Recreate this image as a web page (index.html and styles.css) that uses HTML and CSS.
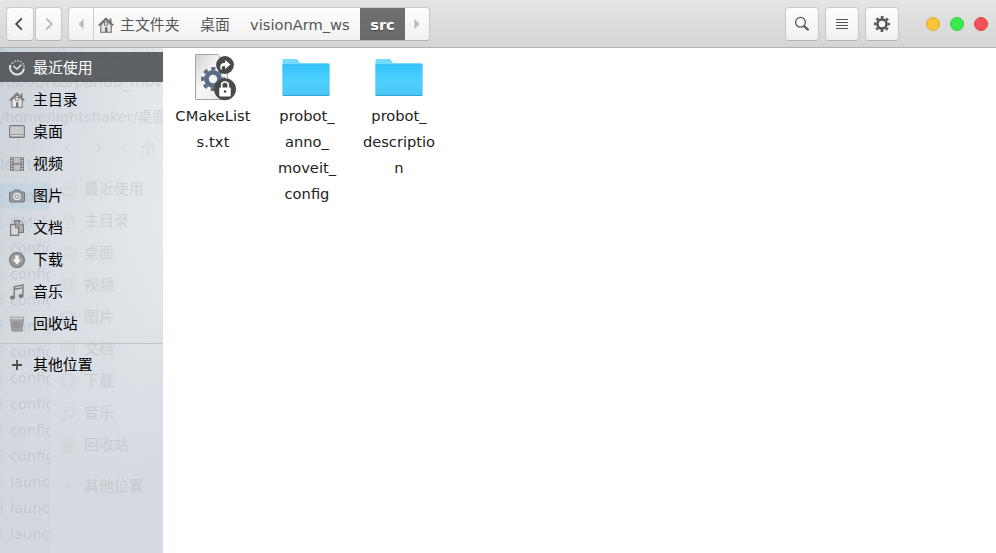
FILE: index.html
```
<!DOCTYPE html>
<html lang="zh-CN">
<head>
<meta charset="utf-8">
<title>src</title>
<link rel="stylesheet" href="styles.css">
</head>
<body>
<svg class="defs" width="0" height="0">
  <defs>
    <linearGradient id="folderFill" x1="0" y1="0" x2="0" y2="1"><stop offset="0" stop-color="#36c5fb"/><stop offset=".55" stop-color="#4fd0fe"/><stop offset="1" stop-color="#4cc5f4"/></linearGradient>
    <linearGradient id="paper" x1="0" y1="0" x2="1" y2="1"><stop offset="0" stop-color="#cfcfcf"/><stop offset=".45" stop-color="#f8f8f8"/><stop offset="1" stop-color="#e6e6e6"/></linearGradient>
  </defs>
  <symbol id="recent" viewBox="0 0 16 16"><path d="M1.600 4.800A7 7 0 1 0 15 8.300" fill="none" stroke="currentColor" stroke-width="2"/><path d="M4.300 6l3.700 3 4.300-4.300" fill="none" stroke="currentColor" stroke-width="1.500"/><path d="M2.800 3h1.500M5.300 1.200h1.500M8.300.8h1.500M11.200 1.600h1.500M13.300 3.800h1.500M14.300 6.300h1.500" stroke="currentColor" stroke-width="1.300"/></symbol>
  <symbol id="home" viewBox="0 0 16 16"><path d="M2.800 8v7.300h10.400V8L8 2.700z" fill="#e4e6e9" stroke="currentColor" stroke-width="1.100"/><path d="M12.600 5.500V1.500" stroke="currentColor" stroke-width="1.800"/><path d="M.6 8.500L8 1.500l7.400 7" fill="none" stroke="currentColor" stroke-width="1.700"/><path d="M6.500 5.500h3v2.800h-3z" fill="#f4f5f6" stroke="currentColor" stroke-width=".9"/><path d="M7 10.200h2.400V15H7z" fill="currentColor"/></symbol>
  <symbol id="desktop" viewBox="0 0 16 16"><rect x=".6" y="1.600" width="14.800" height="11.800" rx="1" fill="#c8cbce" stroke="currentColor" stroke-width="1.100"/><path d="M2.500 13v-2.500h11V13z" fill="#eceeef" stroke="currentColor" stroke-width=".7"/><path d="M5.500 11.500V13M8 11.500V13M10.500 11.500V13" stroke="currentColor"/></symbol>
  <symbol id="video" viewBox="0 0 16 16"><path d="M1 1h14v14H1z" fill="currentColor"/><path d="M4.500 1.500h7v5.700h-7zM4.500 8.500h7v6h-7z" fill="#bcc0c3"/><path d="M2.600 1.500V15M13.400 1.500V15" stroke="#e4e6e8" stroke-width="1.400" stroke-dasharray="1.400 1.200"/></symbol>
  <symbol id="camera" viewBox="0 0 16 16"><path d="M1.500 4h2.700l1.300-2h5l1.300 2h2.700q1 0 1 1v8q0 1-1 1h-13q-1 0-1-1V5q0-1 1-1z" fill="#97999b" stroke="currentColor"/><circle cx="8" cy="8.500" r="3.200" fill="#a8abae" stroke="#eef0f1" stroke-width="1.200"/><circle cx="8" cy="8.500" r="1" fill="#eef0f1"/></symbol>
  <symbol id="docs" viewBox="0 0 16 16"><path d="M5.500.7h5.300l3.600 3.800v7.800H5.500z" fill="#acafb1" stroke="currentColor" stroke-width="1.200"/><path d="M10.600.8v4h4" fill="#dfe2e4" stroke="currentColor"/><path d="M1.600 4.600h5l3 3v7.700h-8z" fill="#d6d9dc" stroke="currentColor" stroke-width="1.200"/><path d="M6.400 4.700v3.200h3.200" fill="none" stroke="currentColor"/></symbol>
  <symbol id="down" viewBox="0 0 16 16"><circle cx="8" cy="8" r="7.400" fill="#999b9d" stroke="currentColor" stroke-width="1.200"/><path d="M6.200 3.500h3.600v4h2.500L8 12.400 3.700 7.500h2.500z" fill="#f3f4f5"/></symbol>
  <symbol id="music" viewBox="0 0 16 16"><path d="M5.200 13V2.800L13.900.9v10.600M5.200 5.500l8.700-1.900" fill="none" stroke="currentColor" stroke-width="1.400"/><ellipse cx="3.500" cy="13.600" rx="2.500" ry="2" fill="currentColor"/><ellipse cx="12" cy="12" rx="2.500" ry="2" fill="currentColor"/></symbol>
  <symbol id="trash" viewBox="0 0 16 16"><path d="M1.300 1.200h13.400l-1.800 13.900H3.100z" fill="#a0a3a5" stroke="currentColor" stroke-width=".7"/><path d="M1.600 1.500h12.800l-.2 1.700H1.800z" fill="#d0d3d5"/><path d="M4 6l4-1 4 3-1 4-4 1-3-3z" fill="currentColor" opacity=".4"/></symbol>
  <symbol id="plus" viewBox="0 0 16 16"><path d="M8 3v10M3 8h10" stroke="currentColor" stroke-width="1.800"/></symbol>
  <symbol id="left" viewBox="0 0 16 16"><path d="M10.800 2.300L5.200 8l5.600 5.700" fill="none" stroke="currentColor" stroke-width="1.800"/></symbol>
  <symbol id="right" viewBox="0 0 16 16"><path d="M5.200 2.300L10.800 8l-5.600 5.700" fill="none" stroke="currentColor" stroke-width="1.800"/></symbol>
  <symbol id="triL" viewBox="0 0 6 10"><path d="M5.500 0v10L.5 5z" fill="currentColor"/></symbol>
  <symbol id="triR" viewBox="0 0 6 10"><path d="M.5 0v10l5-5z" fill="currentColor"/></symbol>
  <symbol id="folder" viewBox="0 0 48 37"><path d="M.5 6V1.500Q.5 0 2 0h12q1 0 1.800 1l2.200 3h28q1.500 0 1.500 1.500V9H.5z" fill="#74dafe"/><rect x=".3" y="5.500" width="47.400" height="31.500" rx="1" fill="url(#folderFill)"/><path d="M1 6h46" stroke="#2bb6ea" stroke-width=".8"/><path d="M1 36.500h46" stroke="#32a7d5"/></symbol>
  <symbol id="check" viewBox="0 0 16 16"><path d="M.5 1.500h13v13H.5z" fill="none" stroke="currentColor"/><path d="M10 9l3-3" stroke="currentColor" stroke-width="2"/></symbol>
</svg>

<header class="bar">
  <div class="nav">
    <button class="btn nav-btn"><svg class="i16"><use href="#left"/></svg></button>
    <button class="btn nav-btn off"><svg class="i16"><use href="#right"/></svg></button>
  </div>
  <div class="path">
    <span class="end start"><svg class="tri"><use href="#triL"/></svg></span>
    <span class="crumb crumb-home"><svg class="i16"><use href="#home"/></svg>主文件夹</span>
    <span class="crumb crumb-desk">桌面</span>
    <span class="crumb crumb-ws">visionArm_ws</span>
    <span class="crumb current">src</span>
    <span class="end"><svg class="tri"><use href="#triR"/></svg></span>
  </div>
  <div class="tools">
    <button class="btn"><svg class="i16" viewBox="0 0 16 16"><circle cx="6.500" cy="6.300" r="4.900" fill="none" stroke="#555" stroke-width="1.300"/><path d="M10 10l4.500 4.200" stroke="#555" stroke-width="2.200"/></svg></button>
    <button class="btn"><svg class="i16" viewBox="0 0 16 16"><path d="M2 3.500h12M2 6.500h12M2 9.500h12M2 12.500h12" stroke="#555"/></svg></button>
    <button class="btn"><svg class="i16" viewBox="0 0 16 16"><circle cx="8" cy="8" r="4.600" fill="none" stroke="#555" stroke-width="2.600"/><circle cx="8" cy="8" r="6.900" fill="none" stroke="#555" stroke-width="2.200" stroke-dasharray="2.700 2.719" stroke-dashoffset="1.350"/></svg></button>
  </div>
  <div class="lights"><i class="light min"></i><i class="light max"></i><i class="light close"></i></div>
</header>

<main class="body">
  <aside class="side">
    <div class="ghost" aria-hidden="true">
      <div class="g-lines">
        <p class="g-over">Overwriting an existing</p>
        <p class="g-robot">robot/ros/panda_move</p>
        <p class="g-path">/home/lightshaker/桌面</p>
        <p class="g-les">les to</p>
      </div>
      <ul class="g-tree">
        <li class="g-sel"><svg class="i16"><use href="#check"/></svg>pro</li>
        <li><svg class="i16"><use href="#check"/></svg>CMake</li>
        <li><svg class="i16"><use href="#check"/></svg>config</li>
        <li><svg class="i16"><use href="#check"/></svg>config</li>
        <li><svg class="i16"><use href="#check"/></svg>config</li>
        <li><svg class="i16"><use href="#check"/></svg>config</li>
        <li><svg class="i16"><use href="#check"/></svg>config</li>
        <li><svg class="i16"><use href="#check"/></svg>config</li>
        <li><svg class="i16"><use href="#check"/></svg>config</li>
        <li><svg class="i16"><use href="#check"/></svg>config</li>
        <li><svg class="i16"><use href="#check"/></svg>config</li>
        <li><svg class="i16"><use href="#check"/></svg>launch</li>
        <li><svg class="i16"><use href="#check"/></svg>launch</li>
        <li><svg class="i16"><use href="#check"/></svg>launch</li>
      </ul>
      <div class="g-win">
        <div class="g-nav"><svg class="i16"><use href="#left"/></svg><svg class="i16"><use href="#right"/></svg><svg class="tri"><use href="#triL"/></svg><svg class="i16"><use href="#home"/></svg></div>
        <div class="row"><svg class="i16"><use href="#recent"/></svg>最近使用</div>
        <div class="row"><svg class="i16"><use href="#home"/></svg>主目录</div>
        <div class="row"><svg class="i16"><use href="#desktop"/></svg>桌面</div>
        <div class="row"><svg class="i16"><use href="#video"/></svg>视频</div>
        <div class="row"><svg class="i16"><use href="#camera"/></svg>图片</div>
        <div class="row"><svg class="i16"><use href="#docs"/></svg>文档</div>
        <div class="row"><svg class="i16"><use href="#down"/></svg>下载</div>
        <div class="row"><svg class="i16"><use href="#music"/></svg>音乐</div>
        <div class="row"><svg class="i16"><use href="#trash"/></svg>回收站</div>
        <div class="row other"><svg class="i16"><use href="#plus"/></svg>其他位置</div>
      </div>
    </div>
    <nav class="places">
      <div class="row active"><svg class="i16"><use href="#recent"/></svg>最近使用</div>
      <div class="row"><svg class="i16"><use href="#home"/></svg>主目录</div>
      <div class="row"><svg class="i16"><use href="#desktop"/></svg>桌面</div>
      <div class="row"><svg class="i16"><use href="#video"/></svg>视频</div>
      <div class="row"><svg class="i16"><use href="#camera"/></svg>图片</div>
      <div class="row"><svg class="i16"><use href="#docs"/></svg>文档</div>
      <div class="row"><svg class="i16"><use href="#down"/></svg>下载</div>
      <div class="row"><svg class="i16"><use href="#music"/></svg>音乐</div>
      <div class="row"><svg class="i16"><use href="#trash"/></svg>回收站</div>
      <div class="row other"><svg class="i16 dark"><use href="#plus"/></svg>其他位置</div>
    </nav>
  </aside>
  <section class="files">
    <figure class="file">
      <svg class="pic" viewBox="0 0 48 48">
        <path d="M6.500 1.500h22l10 11v34h-32z" fill="url(#paper)" stroke="#a4a4a4"/>
        <circle cx="24" cy="26" r="6.600" fill="none" stroke="#5d6c86" stroke-width="4.800"/>
        <circle cx="24" cy="26" r="10.300" fill="none" stroke="#5d6c86" stroke-width="3.400" stroke-dasharray="4.200 3.890" stroke-dashoffset="2.100"/>
        <circle cx="36" cy="12" r="8.900" fill="#4a4a4a"/>
        <path d="M31.300 16.500v-3q0-3.500 3.800-3.500h.900V7l5.500 4.500-5.500 4.500v-3h-1.500q-1.700 0-1.700 1.700v1.800z" fill="#fff"/>
        <circle cx="36" cy="36.300" r="11" fill="#4a4a4a"/>
        <rect x="30.300" y="34.500" width="11.400" height="9" rx="1" fill="#fff"/>
        <path d="M32.700 35v-3.200q0-2.800 3.300-2.800t3.300 2.800V35" fill="none" stroke="#fff" stroke-width="1.600"/>
        <circle cx="36" cy="38.500" r="1.300" fill="#4a4a4a"/>
      </svg>
      <figcaption class="wide">CMakeList<br>s.txt</figcaption>
    </figure>
    <figure class="file"><svg class="pic folder"><use href="#folder"/></svg><figcaption class="nudge">probot_<br>anno_<br>moveit_<br>config</figcaption></figure>
    <figure class="file"><svg class="pic folder"><use href="#folder"/></svg><figcaption>probot_<br>descriptio<br>n</figcaption></figure>
  </section>
</main>
</body>
</html>
```
FILE: styles.css
```
* { box-sizing: border-box; }
body {
  margin: 0;
  width: 996px;
  height: 553px;
  overflow: hidden;
  background: #fff;
  color: #222;
  font: 14.667px/26px "DejaVu Sans", "Noto Sans CJK SC", sans-serif;
}
.defs { position: absolute; }
svg { display: block; flex: none; }
.i16 { width: 16px; height: 16px; }
.tri { width: 6px; height: 10px; color: #b8b8b8; }

.bar {
  display: flex;
  align-items: center;
  height: 48px;
  padding: 1px 8px 0 6px;
  background: linear-gradient(#e5e5e5, #d5d5d5);
  border-bottom: 1px solid #b2b2b2;
  border-top-left-radius: 3px;
}
.btn, .path {
  height: 34px;
  padding: 0;
  background: linear-gradient(#fdfdfd, #f1f1f1);
  border: 1px solid #c9c9c9;
  border-bottom-color: #b4b4b4;
  border-radius: 4px;
}
.btn {
  display: flex;
  align-items: center;
  justify-content: center;
  width: 34px;
}
.nav { display: flex; gap: 1px; }
.nav-btn { width: 28px; padding-right: 2px; color: #454545; }
.off { width: 27px; color: #b9b9b9; padding-right: 0; }
.path {
  display: flex;
  width: 362px;
  margin-left: 6px;
  overflow: hidden;
  color: #555;
}
.end { display: flex; align-items: center; justify-content: center; width: 24px; }
.start { width: 25px; border-right: 1px solid #ccc; }
.crumb { display: flex; align-items: center; padding-top: 2px; white-space: nowrap; }
.crumb-home { width: 96px; padding-left: 4px; gap: 6px; font-size: 14.900px; }
.crumb-home .i16 { color: #6c6c6c; }
.crumb-desk { width: 60px; padding-left: 10px; font-size: 14.900px; }
.crumb-ws { width: 110px; }
.current {
  justify-content: center;
  width: 45px;
  margin: -1px 0;
  background: linear-gradient(#707070, #696969);
  color: #fff;
  font-weight: bold;
  text-shadow: 0 1px 1px #444;
}
.tools { display: flex; gap: 6px; margin-left: auto; }
.lights { display: flex; gap: 10px; margin-left: 27px; }
.light { width: 14px; height: 14px; border-radius: 50%; border: 1px solid; }
.min { background: #fbc535; border-color: #deaf35; }
.max { background: #3aeb4b; border-color: #34ce43; }
.close { background: #f75058; border-color: #d9454c; }

.body { display: flex; height: 505px; }
.side {
  position: relative;
  width: 163px;
  padding-top: 4px;
  overflow: hidden;
  color: #000;
  background:
    linear-gradient(to bottom, rgba(211, 216, 223, 0) 35%, #d3d8df 88%),
    linear-gradient(100deg, #ccd2d9 0, #dbdfe5 38%, #e9ebef 80%, #e4e7ec);
}
.places { position: relative; }
.row { display: flex; align-items: center; gap: 8px; height: 32px; padding-left: 9px; white-space: nowrap; font-size: 14.900px; }
.row .i16 { color: #77797b; }
.row .dark { color: #4b4d4f; }
.active { height: 30px; padding-top: 1px; margin-bottom: 2px; color: #fff; background: rgba(80, 83, 86, .9); }
.active .i16 { color: #e5e5e5; }
.other { height: 43px; margin-top: 3px; border-top: 1px solid #bfc3c8; }

.ghost { position: absolute; inset: 0; color: #75808b; }
.ghost p, .ghost ul { margin: 0; padding: 0; white-space: nowrap; }
.g-lines { height: 135px; font-size: 15.300px; opacity: .17; }
.g-over { margin-left: -4px !important; height: 21px; line-height: 17px; }
.g-robot { height: 26px; font-style: italic; }
.g-path { height: 55px; line-height: 44px; font-size: 14.667px; }
.g-les { line-height: 30px; }
.g-tree { width: 50px; overflow: hidden; list-style: none; }
.g-tree li { display: flex; align-items: center; gap: 6px; height: 26px; color: rgba(96, 106, 116, .17); }
.g-tree .i16 { width: 14px; height: 14px; margin-left: -10px; opacity: .5; }
.g-tree .g-sel { background: rgba(160, 200, 228, .25); }
.g-win {
  position: absolute;
  top: 76px;
  left: 50px;
  width: 113px;
  height: 429px;
  background: rgba(222, 227, 235, .18);
}
.g-win .row, .g-nav { padding-left: 10px; opacity: .14; }
.g-win .row { color: #5b6570; padding-top: 2px; }
.g-win .row .i16 { opacity: .45; }
.g-nav { display: flex; align-items: center; gap: 14px; height: 48px; opacity: .08; }
.g-win .other { border-color: transparent; }

.files { display: flex; gap: 9px; padding: 5px 0 0 8px; }
.file { display: flex; flex-direction: column; align-items: center; width: 84px; margin: 0; }
.pic { width: 48px; height: 48px; }
.folder { height: 37px; margin: 6px 0 5px; }
figcaption { margin-top: 2px; text-align: center; }
.wide { letter-spacing: .1px; }
.nudge { padding-left: 2px; }
```
